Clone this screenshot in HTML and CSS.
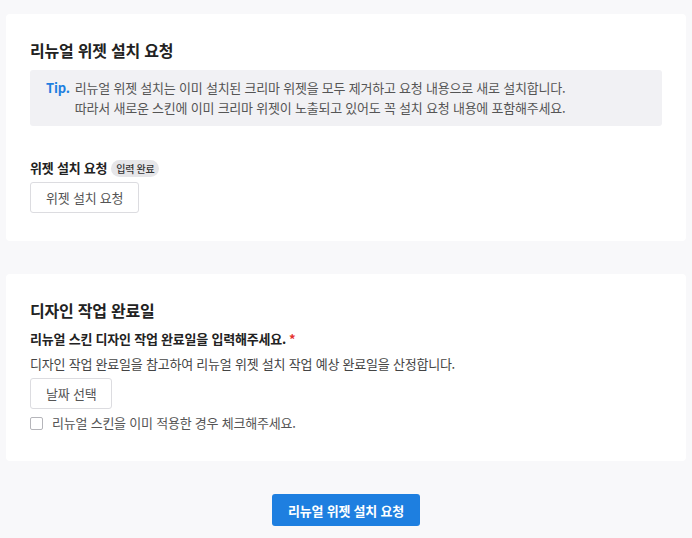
FILE: index.html
```html
<!DOCTYPE html>
<html lang="ko">

<head>
    <meta charset="UTF-8">
    <meta name="viewport" content="width=device-width, initial-scale=1.0">
    <title>리뉴얼 위젯 설치 요청</title>
    <link rel="stylesheet" href="styles.css">
</head>

<body>
    <div class="page">
        <section class="card">
            <h2 class="card-title">리뉴얼 위젯 설치 요청</h2>
            <div class="tip-box">
                <span class="tip-label">Tip.</span>
                <p class="tip-text">리뉴얼 위젯 설치는 이미 설치된 크리마 위젯을 모두 제거하고 요청 내용으로 새로 설치합니다.<br>따라서 새로운 스킨에 이미 크리마 위젯이 노출되고 있어도 꼭 설치 요청 내용에 포함해주세요.</p>
            </div>

            <div class="field field-spaced">
                <div class="field-label">위젯 설치 요청 <span class="badge">입력 완료</span></div>
                <button type="button" class="outline-btn">위젯 설치 요청</button>
            </div>
        </section>

        <section class="card">
            <h2 class="card-title">디자인 작업 완료일</h2>
            <div class="field">
                <div class="field-label label-gap">리뉴얼 스킨 디자인 작업 완료일을 입력해주세요. <span class="required">*</span></div>
                <p class="field-desc">디자인 작업 완료일을 참고하여 리뉴얼 위젯 설치 작업 예상 완료일을 산정합니다.</p>
                <button type="button" class="outline-btn">날짜 선택</button>
                <label class="check-row">
                    <input type="checkbox" class="check-box">
                    <span>리뉴얼 스킨을 이미 적용한 경우 체크해주세요.</span>
                </label>
            </div>
        </section>

        <div class="actions">
            <button type="button" class="primary-btn">리뉴얼 위젯 설치 요청</button>
        </div>
    </div>
</body>

</html>
```

FILE: styles.css
```css
/* Basic Reset */
* {
    margin: 0;
    padding: 0;
    box-sizing: border-box;
}

body {
    font-family: 'Noto Sans CJK KR', 'Noto Sans', sans-serif;
    background-color: #f8f8fa;
    color: #333;
    font-size: 13px;
    letter-spacing: -0.22px;
}

.page {
    padding: 14px 6px 12px;
}

/* Cards */
.card {
    background-color: #fff;
    border-radius: 4px;
    padding: 24px 24px 28px;
    margin-bottom: 33px;
}

.card-title {
    font-size: 16px;
    line-height: 24px;
    font-weight: 700;
    color: #222;
}

/* Tip box */
.tip-box {
    display: flex;
    margin-top: 8px;
    padding: 8px 16px;
    background-color: #f1f1f4;
    border-radius: 3px;
}

.tip-label {
    color: #1e7fe0;
    font-weight: 700;
    line-height: 20px;
    margin-right: 5px;
}

.tip-text {
    line-height: 20px;
    color: #555;
}

/* Fields */
.field-spaced {
    margin-top: 32px;
}

.field-label {
    display: flex;
    align-items: center;
    font-weight: 700;
    line-height: 20px;
    color: #222;
}

.label-gap {
    margin-top: 7px;
}

.badge {
    display: inline-block;
    margin-left: 4px;
    padding: 0 5px;
    font-size: 10px;
    line-height: 17px;
    font-weight: 500;
    letter-spacing: -0.3px;
    color: #333;
    background-color: #e6e6e9;
    border-radius: 9px;
}

.required {
    color: #e5322d;
    margin-left: 3px;
}

.field-desc {
    margin-top: 5px;
    line-height: 20px;
    color: #444;
}

.outline-btn {
    display: block;
    margin-top: 4px;
    height: 31px;
    padding: 0 15px;
    font-family: inherit;
    font-size: 13px;
    letter-spacing: -0.22px;
    color: #555;
    background-color: #fff;
    border: 1px solid #dcdce0;
    border-radius: 3px;
    cursor: pointer;
}

.check-row {
    display: flex;
    align-items: center;
    margin-top: 4px;
    line-height: 20px;
    color: #555;
    cursor: pointer;
}

.check-box {
    appearance: none;
    width: 13px;
    height: 13px;
    margin-right: 9px;
    border: 1px solid #b5b5ba;
    border-radius: 2px;
    background-color: #fff;
}

/* Bottom action */
.actions {
    display: flex;
    justify-content: center;
}

.primary-btn {
    height: 32px;
    padding: 0 16px;
    font-family: inherit;
    font-size: 13px;
    font-weight: 700;
    letter-spacing: -0.22px;
    color: #fff;
    background-color: #1e7fe0;
    border: none;
    border-radius: 3px;
    cursor: pointer;
}
```
